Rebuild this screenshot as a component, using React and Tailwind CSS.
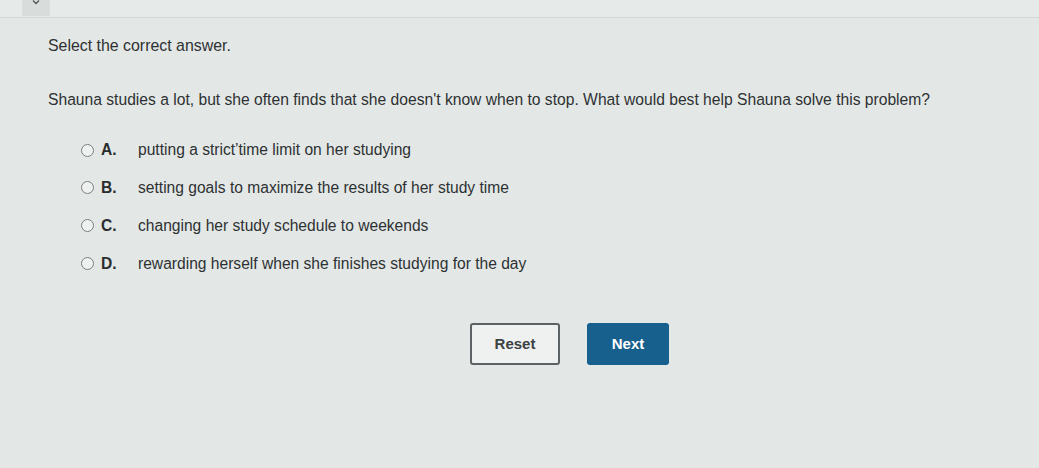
export default function App() {
  const options = [
    ['A.', 'putting a strict\u2019time limit on her studying'],
    ['B.', 'setting goals to maximize the results of her study time'],
    ['C.', 'changing her study schedule to weekends'],
    ['D.', 'rewarding herself when she finishes studying for the day'],
  ]

  return (
    <div className="h-[468px] w-[1039px] overflow-hidden bg-[#e3e8e7] font-['Liberation_Sans',Arial,sans-serif] text-[#2e3132]">
      <div className="flex h-[18px] border-b border-[#d3d8d7] bg-[#e6eae9]">
        <div className="ml-[22px] flex h-[16px] w-[28px] items-start justify-center bg-[#d8dcdb]">
          <svg width="8" height="5" viewBox="0 0 8 5" className="mt-[0px]">
            <path d="M1 0.5 L4 3.5 L7 0.5" fill="none" stroke="#555" strokeWidth="1.3" />
          </svg>
        </div>
      </div>

      <div className="pl-[48px] pt-[18px]">
        <p className="text-[15.9px] leading-[20px]">Select the correct answer.</p>
        <p className="mt-[34px] text-[15.65px] leading-[20px]">
          Shauna studies a lot, but she often finds that she doesn't know when to stop. What would best help Shauna solve this problem?
        </p>

        <div className="mt-[30px] flex flex-col gap-[17.8px] pl-[33px]">
          {options.map(([letter, text]) => (
            <div key={letter} className="flex h-[20px] items-center">
              <span className="h-[13px] w-[13px] rounded-full border border-[#7b7f80] bg-[#eef1f0]" />
              <span className="ml-[7px] w-[37px] text-[15.6px] font-bold text-[#2a2d2e]">{letter}</span>
              <span className="text-[15.6px]">{text}</span>
            </div>
          ))}
        </div>

        <div className="mt-[50px] flex gap-[27px] pl-[422px]">
          <button className="h-[42px] w-[90px] rounded-[3px] border-2 border-[#5d6264] bg-[#eef1f0] text-[15px] font-bold text-[#3c4143]">
            Reset
          </button>
          <button className="h-[42px] w-[82px] rounded-[3px] bg-[#175f8c] text-[15px] font-bold text-white">
            Next
          </button>
        </div>
      </div>
    </div>
  )
}
